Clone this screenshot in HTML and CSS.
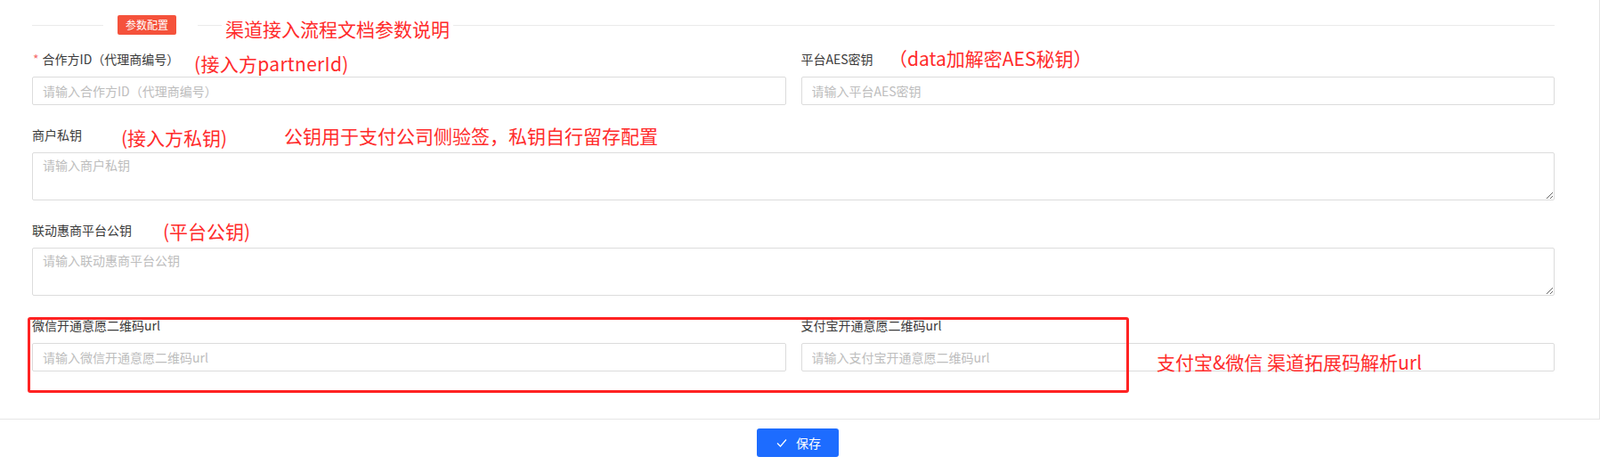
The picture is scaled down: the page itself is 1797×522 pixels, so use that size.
FILE: index.html
```html
<!DOCTYPE html>
<html lang="zh-CN">

<head>
  <meta charset="UTF-8">
  <meta name="viewport" content="width=device-width, initial-scale=1.0">
  <title>渠道参数配置</title>
  <link rel="stylesheet" href="styles.css">
</head>

<body>
  <section class="channel-config">
    <div class="config-body">
      <div class="divider">
        <span class="divider-line divider-line-left"></span>
        <span class="divider-text"><span class="badge">参数配置</span></span>
        <span class="divider-line"></span>
      </div>

      <form class="config-form" action="">
        <div class="form-row">
          <div class="form-item">
            <label class="required" for="partner_id">合作方ID（代理商编号）</label>
            <input type="text" id="partner_id" placeholder="请输入合作方ID（代理商编号）">
          </div>
          <div class="form-item">
            <label for="aes_key">平台AES密钥</label>
            <input type="text" id="aes_key" placeholder="请输入平台AES密钥">
          </div>
        </div>

        <div class="form-item">
          <label for="private_key">商户私钥</label>
          <textarea id="private_key" rows="2" placeholder="请输入商户私钥"></textarea>
        </div>

        <div class="form-item">
          <label for="public_key">联动惠商平台公钥</label>
          <textarea id="public_key" rows="2" placeholder="请输入联动惠商平台公钥"></textarea>
        </div>

        <div class="form-row form-row-last">
          <div class="form-item">
            <label for="wechat_url">微信开通意愿二维码url</label>
            <input type="text" id="wechat_url" placeholder="请输入微信开通意愿二维码url">
          </div>
          <div class="form-item">
            <label for="alipay_url">支付宝开通意愿二维码url</label>
            <input type="text" id="alipay_url" placeholder="请输入支付宝开通意愿二维码url">
          </div>
        </div>
      </form>
    </div>

    <div class="config-footer">
      <button type="submit" class="btn-save">
        <svg width="12" height="12" viewBox="0 0 12 12" aria-hidden="true">
          <polyline points="1,6.5 4.5,10 11,2.5" fill="none" stroke="#fff" stroke-width="1.2"></polyline>
        </svg>
        <span>保存</span>
      </button>
    </div>

    <!-- screenshot notes drawn on top of the form -->
    <div class="note note-title">渠道接入流程文档参数说明</div>
    <div class="note note-partner">(接入方partnerId)</div>
    <div class="note note-aes">（data加解密AES秘钥）</div>
    <div class="note note-private">(接入方私钥)</div>
    <div class="note note-sign">公钥用于支付公司侧验签，私钥自行留存配置</div>
    <div class="note note-public">(平台公钥)</div>
    <div class="note note-url">支付宝&amp;微信 渠道拓展码解析url</div>
    <div class="mark-box"></div>
  </section>
</body>

</html>
```

FILE: styles.css
```css
body {
  margin: 0;
  font-family: "Noto Sans CJK SC", "Microsoft YaHei", sans-serif;
  font-size: 14px;
  color: #333;
  background: #fff;
}

.channel-config {
  position: relative;
  display: flex;
  flex-direction: column;
  height: 522px;
}

.config-body {
  flex: 1;
  padding: 17px 50px 0 36px;
  border-right: 1px solid #e4e4e4;
}

.divider {
  display: flex;
  align-items: center;
  height: 22px;
}

.divider-line {
  flex: 1;
  height: 1px;
  background: #ebebeb;
}

.divider-line-left {
  flex: none;
  width: 80px;
}

.divider-text {
  padding: 0 24px 0 16px;
}

.badge {
  display: inline-block;
  width: 66px;
  height: 22px;
  line-height: 22px;
  text-align: center;
  font-size: 12px;
  color: #fff;
  background: #f5523b;
  border-radius: 2px;
}

.config-form {
  margin-top: 16px;
}

.form-row {
  display: grid;
  grid-template-columns: 1fr 1fr;
  column-gap: 17px;
}

.form-row-last {
  margin-top: 3px;
}

.form-item {
  margin-bottom: 22px;
}

.form-item label {
  display: block;
  height: 22px;
  line-height: 22px;
  margin-bottom: 9px;
  font-size: 14px;
  font-weight: 400;
  color: #3a3a3a;
  white-space: nowrap;
}

.form-item label.required::before {
  content: "*";
  color: #f56c6c;
  margin: 0 4px 0 1px;
}

.form-item input,
.form-item textarea {
  display: block;
  width: 100%;
  box-sizing: border-box;
  border: 1px solid #dcdcdc;
  border-radius: 2px;
  font-family: inherit;
  font-size: 14px;
  color: #333;
  outline: none;
  background: #fff;
}

.form-item input {
  height: 32px;
  padding: 0 11px;
}

.form-item textarea {
  height: 54px;
  padding: 3px 11px;
  line-height: 1.5;
  resize: vertical;
}

.form-item input::placeholder,
.form-item textarea::placeholder {
  color: #bdbdbd;
}

.config-footer {
  height: 52px;
  border-top: 1px solid #e6e6e6;
  display: flex;
  justify-content: center;
  align-items: flex-start;
  padding: 10px 5px 0 0;
  box-sizing: border-box;
}

.btn-save {
  display: flex;
  align-items: center;
  gap: 10px;
  height: 32px;
  padding: 0 20px 0 22px;
  border: none;
  border-radius: 3px;
  background: #1d6cff;
  color: #fff;
  font-family: inherit;
  font-size: 14px;
  cursor: pointer;
}

/* annotations */
.note {
  position: absolute;
  font-size: 21px;
  line-height: 24px;
  color: #ff2b2b;
  white-space: nowrap;
}

.note-title {
  left: 249px;
  top: 20px;
  padding: 0 4px;
  background: #fff;
}

.note-partner {
  left: 218px;
  top: 59px;
  letter-spacing: 0.3px;
}

.note-aes {
  left: 998px;
  top: 53px;
}

.note-private {
  left: 136px;
  top: 142px;
}

.note-sign {
  left: 319px;
  top: 140px;
}

.note-public {
  left: 183px;
  top: 247px;
}

.note-url {
  left: 1299px;
  top: 394px;
}

.mark-box {
  position: absolute;
  left: 31px;
  top: 356px;
  width: 1237px;
  height: 85px;
  box-sizing: border-box;
  border: 3px solid #ff2222;
  border-radius: 3px;
}
```
